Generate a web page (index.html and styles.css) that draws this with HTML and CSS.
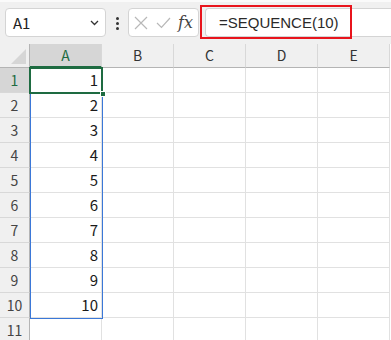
FILE: index.html
```html
<!DOCTYPE html>
<html lang="ja">
<head>
    <meta charset="UTF-8">
    <title>SEQUENCE</title>
    <link rel="stylesheet" href="styles.css">
</head>
<body>

    <!-- Formula bar -->
    <div class="toolbar">
        <div class="name-box">
            <span>A1</span>
            <svg class="chevron" width="9" height="6" viewBox="0 0 9 6"><path d="M1 1 L4.5 4.5 L8 1" fill="none" stroke="#333" stroke-width="1.3"/></svg>
        </div>
        <div class="dots"><i></i><i></i><i></i></div>
        <div class="fx-box">
            <svg width="14" height="14" viewBox="0 0 14 14"><path d="M1 1 L13 13 M13 1 L1 13" stroke="#b8b8b8" stroke-width="1.2" fill="none"/></svg>
            <svg width="15" height="12" viewBox="0 0 15 12"><path d="M1 6 L5.5 10.5 L14 1" stroke="#b8b8b8" stroke-width="1.2" fill="none"/></svg>
            <span class="fx">fx</span>
        </div>
        <div class="formula">=SEQUENCE(10)</div>
        <div class="highlight"></div>
    </div>

    <!-- Sheet -->
    <div class="sheet">
        <div class="corner"><span class="tri"></span></div>
        <div class="col-head active">A</div>
        <div class="col-head">B</div>
        <div class="col-head">C</div>
        <div class="col-head">D</div>
        <div class="col-head">E</div>
    </div>

    <script>
        // build the rows
        const sheet = document.querySelector('.sheet');
        for (let r = 1; r <= 11; r++) {
            const head = document.createElement('div');
            head.className = 'row-head' + (r === 1 ? ' active' : '');
            head.textContent = r;
            sheet.appendChild(head);
            for (let c = 0; c < 5; c++) {
                const cell = document.createElement('div');
                cell.className = 'cell';
                if (c === 0 && r <= 10) cell.textContent = r;
                sheet.appendChild(cell);
            }
        }
        const spill = document.createElement('div');
        spill.className = 'spill';
        sheet.appendChild(spill);
        const sel = document.createElement('div');
        sel.className = 'selection';
        sel.innerHTML = '<span class="handle"></span>';
        sheet.appendChild(sel);
    </script>

</body>
</html>
```

FILE: styles.css
```css
* {
    margin: 0;
    padding: 0;
    box-sizing: border-box;
}

body {
    width: 391px;
    height: 340px;
    overflow: hidden;
    background-color: #f0f0f0;
    font-family: 'Noto Sans CJK JP', 'Noto Sans', sans-serif;
    color: #222;
}

.toolbar {
    position: relative;
    height: 44px;
    display: flex;
    align-items: flex-start;
    padding-top: 8px;
    border-top: 2px solid #fafafa;
}

.name-box {
    margin-left: 5px;
    margin-top: -2px;
    width: 101px;
    height: 29px;
    background-color: white;
    border: 1px solid #d4d4d4;
    border-radius: 4px;
    display: flex;
    align-items: center;
    justify-content: space-between;
    padding: 0 6px 0 7px;
    font-size: 15px;
}

.dots {
    width: 22px;
    height: 27px;
    display: flex;
    flex-direction: column;
    align-items: center;
    justify-content: center;
    gap: 2px;
}

.dots i {
    width: 3px;
    height: 3px;
    background-color: #333;
    border-radius: 50%;
}

.fx-box {
    margin-top: -2px;
    width: 71px;
    height: 29px;
    background-color: white;
    border: 1px solid #d4d4d4;
    border-radius: 4px;
    display: flex;
    align-items: center;
    gap: 8px;
    padding-left: 5px;
}

.fx {
    font-family: 'DejaVu Serif', 'Liberation Serif', serif;
    font-style: italic;
    font-size: 16px;
    color: #444;
    margin-left: -1px;
}

.formula {
    margin-top: -2px;
    margin-left: 6px;
    flex: 1;
    height: 29px;
    background-color: white;
    border: 1px solid #d4d4d4;
    border-right: none;
    border-radius: 4px 0 0 4px;
    padding-left: 13px;
    font-family: 'Liberation Sans', Arial, sans-serif;
    font-size: 15px;
    line-height: 27px;
    color: #2a2a2a;
}

.highlight {
    position: absolute;
    left: 200px;
    top: 3px;
    width: 152px;
    height: 34px;
    border: 2px solid #e8141c;
}

.sheet {
    position: relative;
    display: grid;
    grid-template-columns: 30px repeat(5, 72px);
    grid-template-rows: 24px;
    grid-auto-rows: 25px;
    background-color: white;
}

.corner {
    position: relative;
    background-color: #f0f0f0;
    border-right: 1px solid #b4b4b4;
    border-bottom: 1px solid #b4b4b4;
}

.tri {
    position: absolute;
    right: 3px;
    bottom: 3px;
    width: 0;
    height: 0;
    border-left: 15px solid transparent;
    border-bottom: 15px solid #d6d6d6;
}

.col-head {
    background-color: #f0f0f0;
    border-right: 1px solid #d8d8d8;
    border-bottom: 1px solid #b4b4b4;
    text-align: center;
    font-size: 14px;
    line-height: 23px;
    color: #333;
}

.col-head.active {
    background-color: #d6d6d6;
    border-bottom: 2px solid #1e6b41;
    color: #1e6b41;
}

.row-head {
    background-color: #f0f0f0;
    border-right: 1px solid #b4b4b4;
    border-bottom: 1px solid #d8d8d8;
    text-align: center;
    font-size: 14px;
    line-height: 24px;
    color: #444;
}

.row-head.active {
    background-color: #d6d6d6;
    color: #1e6b41;
}

.cell {
    border-right: 1px solid #e1e1e1;
    border-bottom: 1px solid #e1e1e1;
    text-align: right;
    padding-right: 3px;
    font-size: 15px;
    line-height: 24px;
    color: #1a1a1a;
}

.spill {
    position: absolute;
    left: 30px;
    top: 24px;
    width: 73px;
    height: 251px;
    border: 1px solid #3b78d8;
    pointer-events: none;
}

.selection {
    position: absolute;
    left: 29px;
    top: 23px;
    width: 74px;
    height: 27px;
    border: 2px solid #1e6b41;
}

.handle {
    position: absolute;
    right: -5px;
    bottom: -5px;
    width: 6px;
    height: 6px;
    background-color: #1e6b41;
    border: 1px solid white;
}
```
